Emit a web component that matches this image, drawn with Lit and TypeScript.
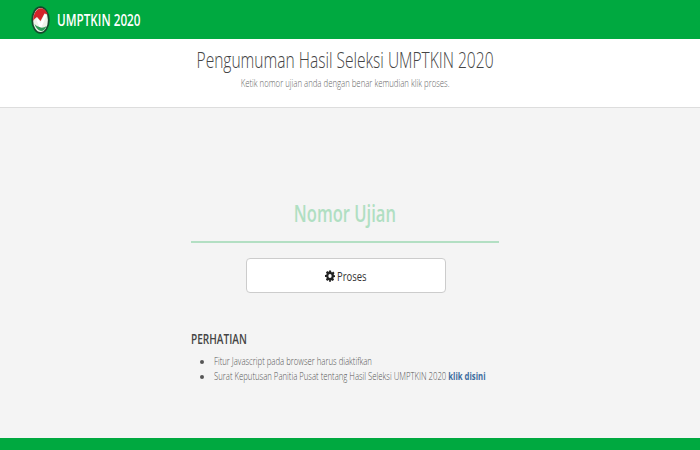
import { LitElement, html, css } from "lit";
import { customElement } from "lit/decorators.js";

@customElement("app-root")
export class AppRoot extends LitElement {
  static styles = css`
    :host {
      display: flex;
      flex-direction: column;
      width: 700px;
      height: 450px;
      overflow: hidden;
      background: #f4f4f4;
      font-family: "Open Sans", "Noto Sans", sans-serif;
      color: #555;
    }
    .nav {
      height: 39px;
      flex: none;
      background: #00a940;
      display: flex;
      align-items: center;
      padding-left: 31px;
      gap: 7px;
    }
    .logo { width: 19px; height: 28px; display: block; }
    .sx { display: inline-block; white-space: nowrap; transform-origin: left center; }
    .center { transform-origin: center; }
    .brand {
      color: #fff;
      font-size: 15.5px;
      font-weight: 600;
      transform: scaleX(0.757);
    }
    .head {
      height: 69px;
      flex: none;
      background: #fff;
      border-bottom: 1px solid #ddd;
      display: flex;
      flex-direction: column;
      align-items: center;
      padding: 5px 9px 0 0;
      box-sizing: border-box;
    }
    .head h1 {
      margin: 0;
      font-size: 22px;
      line-height: 30px;
      font-weight: 300;
      color: #444;
      transform: scaleX(0.707);
    }
    .head p {
      margin: 2px 0 0;
      font-size: 10.5px;
      line-height: 14px;
      font-weight: 300;
      color: #666;
      transform: scaleX(0.74);
    }
    .main {
      flex: 1;
      width: 308px;
      margin-left: 191px;
      display: flex;
      flex-direction: column;
      box-sizing: border-box;
    }
    .field {
      margin-top: 82px;
      height: 45px;
      padding-bottom: 6px;
      border-bottom: 2px solid #b3dfc3;
      display: flex;
      align-items: center;
      justify-content: center;
      color: #b0dfc2;
      font-size: 23px;
      font-weight: 600;
    }
    .field span { transform: scaleX(0.72); }
    .btn {
      margin: 15px 0 0 55px;
      align-self: flex-start;
      width: 200px;
      height: 35px;
      box-sizing: border-box;
      background: #fff;
      border: 1px solid #ccc;
      border-radius: 4px;
      display: flex;
      align-items: center;
      justify-content: center;
      gap: 2px;
      color: #333;
      font: 400 13.5px "Open Sans", sans-serif;
      padding: 0;
    }
    .btn span { width: 30px; margin-right: 1px; transform: scaleX(0.7); }
    .btn svg { width: 10px; height: 12px; display: block; }
    h2 {
      margin: 36px 0 0;
      font-size: 14px;
      line-height: 19px;
      font-weight: 600;
      color: #444;
    }
    h2 span { transform: scaleX(0.72); }
    ul {
      margin: 6px 0 0;
      padding: 0 0 0 23px;
      font-size: 10.5px;
      line-height: 15px;
      font-weight: 300;
      color: #555;
    }
    li span { transform: scaleX(0.737); }
    a { color: #3d6d9f; font-weight: 700; text-decoration: none; }
    .foot { height: 12px; flex: none; background: #00a940; }
  `;

  render() {
    return html`
      <div class="nav">
        <svg class="logo" viewBox="0 0 19 28">
          <ellipse cx="9.500" cy="14" rx="9.200" ry="13.800" fill="#14492c" />
          <ellipse cx="9.500" cy="14" rx="7.400" ry="12" fill="#eef3ea" />
          <path d="M2.300 15 C2 8 5.500 2.200 10 2.200 C13 2.200 15.500 4.500 16.800 8.500 L13.500 7.500 L9.500 15 L6 11 L3.500 13 Z" fill="#d3222a" />
          <path d="M3.500 18 C5 22 7 24.500 10 25 C12.500 25 14.500 23 15.500 20 C13 22 10 22 8.500 21 C6.500 20.500 5 19.500 3.500 18 Z" fill="#2f9a55" />
          <path d="M5.500 14 L7 12.800 L9.500 17 L13.500 8.500 L15.500 9.500 L10.500 21 L8.500 21 Z" fill="#ffffff" />
        </svg>
        <span class="sx brand">UMPTKIN 2020</span>
      </div>
      <div class="head">
        <h1 class="sx center">Pengumuman Hasil Seleksi UMPTKIN 2020</h1>
        <p class="sx center">Ketik nomor ujian anda dengan benar kemudian klik proses.</p>
      </div>
      <div class="main">
        <div class="field"><span class="sx center">Nomor Ujian</span></div>
        <button class="btn">
          <svg viewBox="0 0 24 24" preserveAspectRatio="none"><path fill="#222" fill-rule="evenodd" d="M9.500 1h5l.6 3.200 1.900.8 2.700-1.800 3 3-1.800 2.700.8 1.900L24 10v4l-3.300.6-.8 1.900 1.800 2.700-3 3-2.700-1.800-1.900.8L13.500 24h-3l-.6-3.200-1.900-.8-2.700 1.800-3-3 1.800-2.700-.8-1.900L0 14v-4l3.300-.6.8-1.900-1.800-2.700 3-3 2.700 1.800 1.900-.8zM12 8a4 4 0 1 0 0 8 4 4 0 0 0 0-8z"/></svg>
          <span class="sx">Proses</span>
        </button>
        <h2><span class="sx">PERHATIAN</span></h2>
        <ul>
          <li><span class="sx">Fitur Javascript pada browser harus diaktifkan</span></li>
          <li><span class="sx">Surat Keputusan Panitia Pusat tentang Hasil Seleksi UMPTKIN 2020 <a href="#">klik disini</a></span></li>
        </ul>
      </div>
      <div class="foot"></div>
    `;
  }
}
